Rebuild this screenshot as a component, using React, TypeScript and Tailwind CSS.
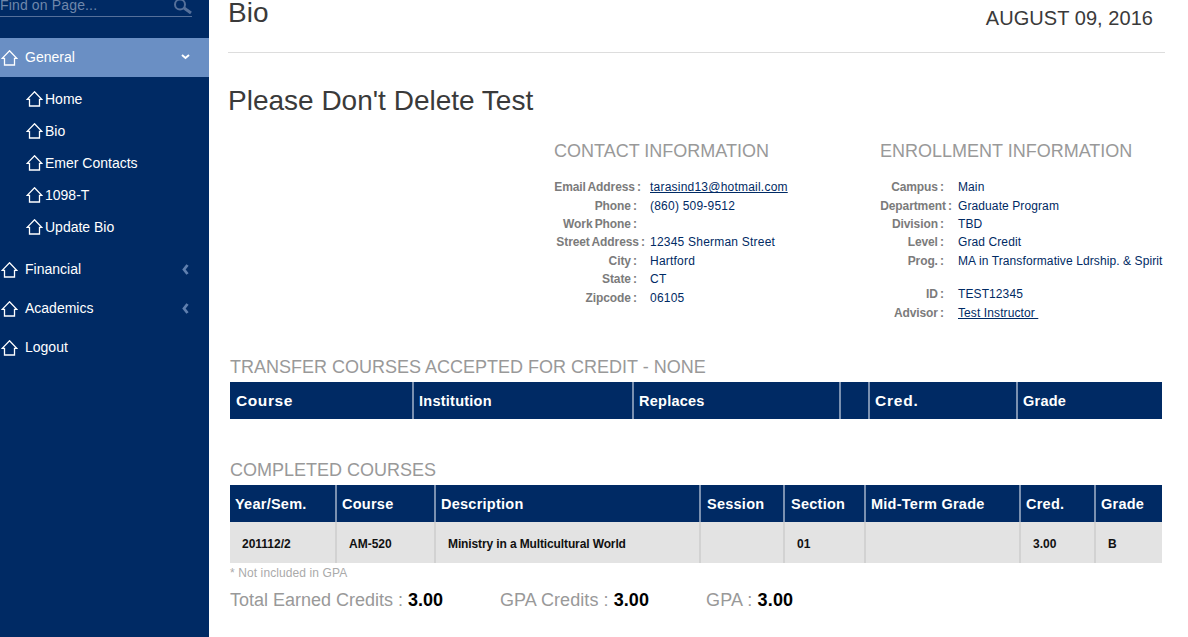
import React from 'react';

const HomeIcon: React.FC = () => (
  <svg width="17" height="16" viewBox="0 0 17 16" fill="none" stroke="#ffffff" strokeWidth="1.3" className="shrink-0">
    <path d="M8.5 0.8 L15.8 8.4 H13.5 V15 H3.5 V8.4 H1.2 Z" strokeLinejoin="miter" />
  </svg>
);

const subItems = ['Home', 'Bio', 'Emer Contacts', '1098-T', 'Update Bio'];

const contact = [
  { label: 'Email Address :', value: 'tarasind13@hotmail.com', pr: 'pr-[9px]', link: true },
  { label: 'Phone :', value: '(860) 509-9512', pr: 'pr-[13px]' },
  { label: 'Work Phone :', value: '', pr: 'pr-[13px]' },
  { label: 'Street Address :', value: '12345 Sherman Street', pr: 'pr-[5px]' },
  { label: 'City :', value: 'Hartford', pr: 'pr-[13px]' },
  { label: 'State :', value: 'CT', pr: 'pr-[13px]' },
  { label: 'Zipcode :', value: '06105', pr: 'pr-[13px]' },
];

const enrollment = [
  { label: 'Campus :', value: 'Main', pr: 'pr-[14px]' },
  { label: 'Department :', value: 'Graduate Program', pr: 'pr-[6px]' },
  { label: 'Division :', value: 'TBD', pr: 'pr-[14px]' },
  { label: 'Level :', value: 'Grad Credit', pr: 'pr-[14px]' },
  { label: 'Prog. :', value: 'MA in Transformative Ldrship. & Spirit', pr: 'pr-[14px]' },
  { label: '', value: '', pr: '' },
  { label: 'ID :', value: 'TEST12345', pr: 'pr-[14px]' },
  { label: 'Advisor :', value: 'Test Instructor', pr: 'pr-[14px]', link: true },
];

type Row = { label: string; value: string; pr: string; link?: boolean };

const InfoBlock: React.FC<{ title: string; rows: Row[]; labelWidth: string; valueClass: string; className: string }> = ({ title, rows, labelWidth, valueClass, className }) => (
  <div className={className}>
    <h3 className="text-[18px] leading-[20px] text-[#999999] mb-[17px]">{title}</h3>
    {rows.map((r, i) => (
      <div key={i} className={r.label ? 'flex h-[18.4px] items-center text-[12px]' : 'h-[15px]'}>
        {r.label && (
          <>
            <div className={`${labelWidth} ${r.pr} shrink-0 text-right font-bold text-[#7b7b7b] whitespace-nowrap tracking-[-0.1px] [word-spacing:-1px]`}>{r.label}</div>
            <div className={r.link ? `${valueClass} text-[#002a64] underline whitespace-pre` : `${valueClass} text-[#002a64] whitespace-nowrap`}>
              {r.value === 'Test Instructor' ? 'Test Instructor ' : r.value}
            </div>
          </>
        )}
      </div>
    ))}
  </div>
);

const completedCols = 'grid-cols-[107px_99px_265px_84px_81px_155px_75px_68px]';

export default function App() {
  return (
    <div className="flex h-[637px] w-[1188px] overflow-hidden bg-white font-['Liberation_Sans',Arial,sans-serif]">
      <aside className="w-[209px] shrink-0 bg-[#002a64] text-white text-[14px]">
        <div className="flex h-[17px] w-[192px] items-center justify-between border-b border-[#55709a]">
          <span className="text-[14px] tracking-[0.15px] text-[#6f87ab] -mt-[6px]">Find on Page...</span>
          <svg width="19" height="16" viewBox="0 0 19 16" fill="none" stroke="#55709a" className="-mt-[3px]">
            <circle cx="7" cy="5.5" r="5" strokeWidth="2" />
            <path d="M11 9 L18 14" strokeWidth="3" />
          </svg>
        </div>
        <div className="mt-[21px] flex h-[39px] items-center bg-[#6a8fc4] pl-[1px]">
          <HomeIcon />
          <span className="ml-[7px] flex-1">General</span>
          <svg width="9" height="6" viewBox="0 0 9 6" fill="none" stroke="#ffffff" strokeWidth="2" className="mr-[19px] mb-[2px]">
            <path d="M1 1 L4.5 4 L8 1" />
          </svg>
        </div>
        <ul className="pt-[6px] pb-[7px]">
          {subItems.map((s) => (
            <li key={s} className="flex h-[32px] items-center gap-[2px] pl-[26px]">
              <HomeIcon />
              <span>{s}</span>
            </li>
          ))}
        </ul>
        {['Financial', 'Academics', 'Logout'].map((s) => (
          <div key={s} className="flex h-[39px] items-center pl-[1px]">
            <HomeIcon />
            <span className="ml-[7px] flex-1">{s}</span>
            {s !== 'Logout' && (
              <svg width="7" height="11" viewBox="0 0 7 11" fill="none" stroke="#5f7fae" strokeWidth="2.8" className="mr-[20px]">
                <path d="M5.5 1 L2 5.5 L5.5 10" />
              </svg>
            )}
          </div>
        ))}
      </aside>

      <main className="flex-1 pl-[19px] pr-[23px] text-[#3a3a3a]">
        <div className="flex h-[53px] justify-between border-b border-[#dddddd]">
          <h1 className="text-[28px] leading-[26px]">Bio</h1>
          <div className="pr-[12px] pt-[7px] text-[20px] leading-[23px] tracking-[0.05px]">AUGUST 09, 2016</div>
        </div>
        <h2 className="mt-[32px] text-[28px] leading-[32px]">Please Don't Delete Test</h2>

        <div className="mt-[24px] flex">
          <InfoBlock title="CONTACT INFORMATION" rows={contact} labelWidth="w-[96px]" valueClass="tracking-[0.22px]" className="ml-[326px] w-[326px]" />
          <InfoBlock title="ENROLLMENT INFORMATION" rows={enrollment} labelWidth="w-[78px]" valueClass="tracking-[0.1px]" className="" />
        </div>

        <h3 className="mt-[35px] ml-[2px] text-[18px] leading-[20px] text-[#999999]">TRANSFER COURSES ACCEPTED FOR CREDIT - NONE</h3>
        <div className="mt-[5px] ml-[2px] grid h-[37px] w-[932px] grid-cols-[184px_220px_207px_29px_148px_144px] bg-[#002a64] text-[14.5px] font-bold text-white tracking-[0.25px]">
          <div className="flex items-center border-r-2 border-[#7a90b0] pl-[6px] pt-[1px] text-[15.5px] tracking-[0.6px]">Course</div>
          <div className="flex items-center border-r-2 border-[#7a90b0] pl-[5px] pt-[3px]">Institution</div>
          <div className="flex items-center border-r-2 border-[#7a90b0] pl-[5px] pt-[3px]">Replaces</div>
          <div className="border-r-2 border-[#7a90b0]" />
          <div className="flex items-center border-r-2 border-[#7a90b0] pl-[5px] pt-[1px] text-[15.5px] tracking-[0.8px]">Cred.</div>
          <div className="flex items-center pl-[5px] pt-[3px]">Grade</div>
        </div>

        <h3 className="mt-[41px] ml-[2px] text-[18px] leading-[20px] text-[#999999]">COMPLETED COURSES</h3>
        <div className="mt-[5px] ml-[2px] w-[932px]">
          <div className={`grid h-[37px] ${completedCols} bg-[#002a64] text-[14.5px] font-bold text-white tracking-[0.25px]`}>
            {['Year/Sem.', 'Course', 'Description', 'Session', 'Section', 'Mid-Term Grade', 'Cred.', 'Grade'].map((h, i) => (
              <div key={h} className={i === 3 || i === 4 ? 'flex items-center border-r-2 border-[#7a90b0] pl-[6px] pt-[3px]' : i < 7 ? 'flex items-center border-r-2 border-[#7a90b0] pl-[5px] pt-[3px]' : 'flex items-center pl-[5px] pt-[3px]'}>{h}</div>
            ))}
          </div>
          <div className={`grid h-[41px] ${completedCols} bg-[#e3e3e3] text-[12px] font-bold text-[#111111]`}>
            {['201112/2', 'AM-520', 'Ministry in a Multicultural World', '', '01', '', '3.00', 'B'].map((c, i) => (
              <div key={i} className={i === 2 ? 'flex items-center border-r-2 border-[#d2d2d2] pl-[12px] pt-[3px] tracking-[-0.12px]' : i < 7 ? 'flex items-center border-r-2 border-[#d2d2d2] pl-[12px] pt-[3px]' : 'flex items-center pl-[12px] pt-[3px]'}>{c}</div>
            ))}
          </div>
        </div>

        <div className="ml-[2px] mt-[3px] text-[12px] leading-[14px] tracking-[0.1px] text-[#aaaaaa]">* Not included in GPA</div>
        <div className="ml-[2px] mt-[10px] flex text-[18px] leading-[20px] text-[#999999]">
          <div className="w-[270px]">Total Earned Credits : <b className="text-black">3.00</b></div>
          <div className="w-[206px] tracking-[0.07px]">GPA Credits : <b className="text-black">3.00</b></div>
          <div className="tracking-[0.15px]">GPA : <b className="text-black">3.00</b></div>
        </div>
      </main>
    </div>
  );
}
